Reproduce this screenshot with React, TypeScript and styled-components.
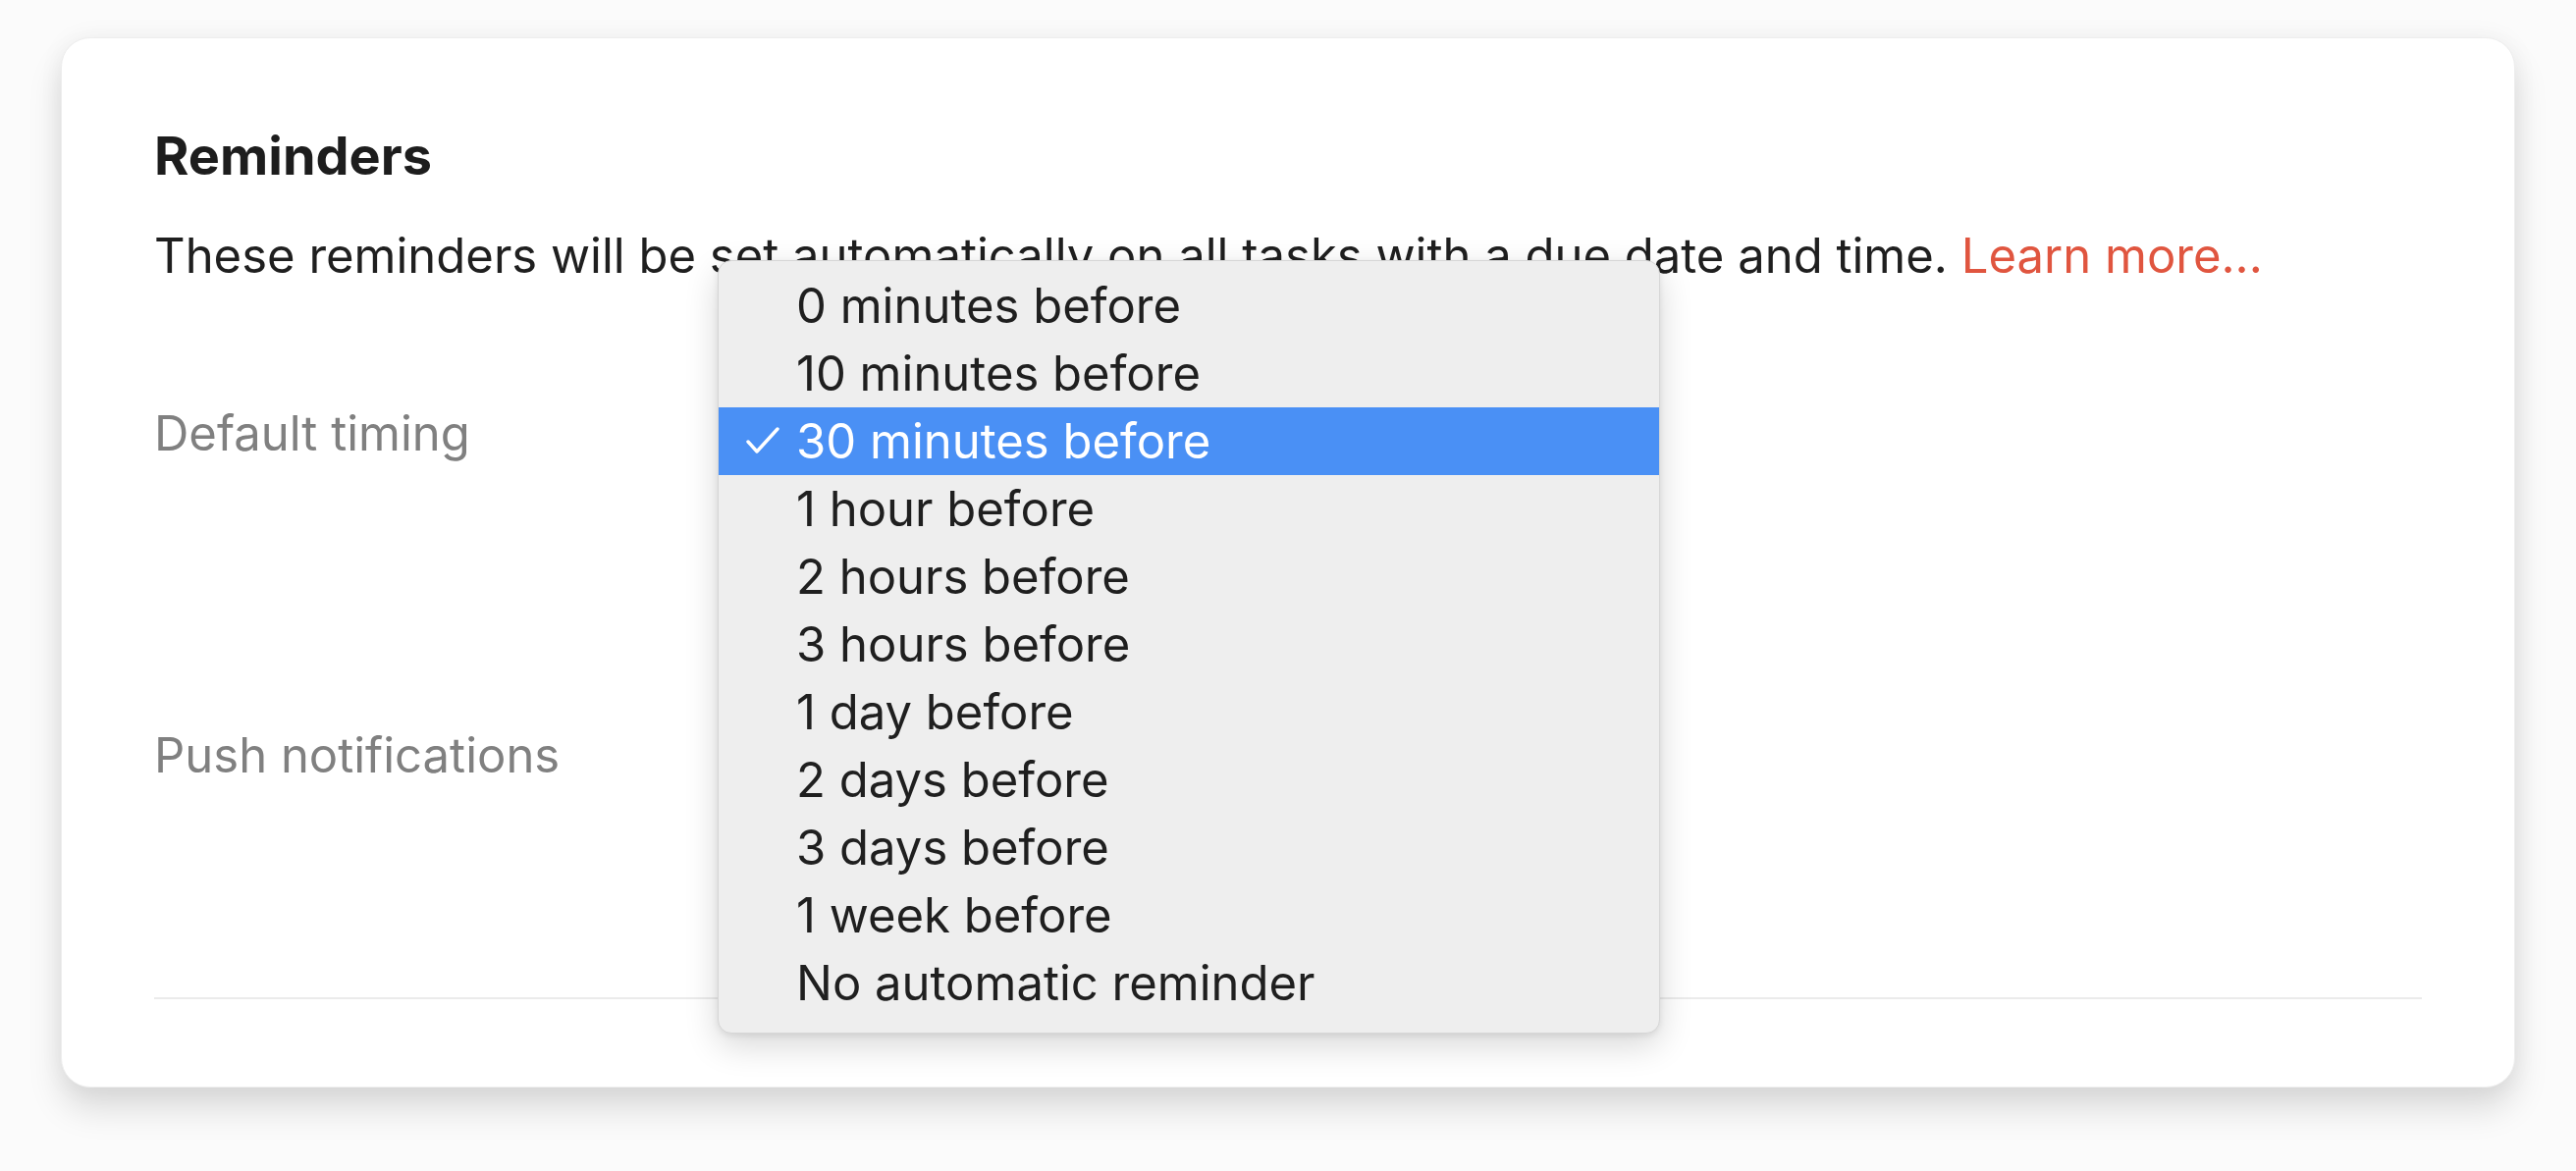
import React from 'react';
import styled, { createGlobalStyle } from 'styled-components';

const GlobalStyle = createGlobalStyle`
  html, body {
    margin: 0;
    padding: 0;
    background: #fbfbfb;
  }
  body {
    font-family: Inter, "Noto Sans", "Liberation Sans", sans-serif;
    color: #202020;
  }
`;

const Page = styled.div`
  padding: 38px 62px 85px 62px;
`;

const Card = styled.section`
  position: relative;
  background: #ffffff;
  border-radius: 30px;
  border: 1px solid #eeeeee;
  box-shadow: 0 22px 34px rgba(0, 0, 0, 0.13), 0 0 26px rgba(0, 0, 0, 0.05);
  padding: 90px 94px 89px 94px;
`;

const Title = styled.h2`
  margin: 0;
  font-size: 54px;
  line-height: 60px;
  font-weight: 700;
  color: #1d1d1d;
`;

const Description = styled.p`
  margin: 42px 0 0 0;
  font-size: 49px;
  line-height: 60px;
  color: #1f1f1f;
`;

const LearnMore = styled.a`
  color: #e0553f;
  text-decoration: none;
  cursor: pointer;
`;

const SettingsList = styled.div`
  margin-top: 121px;
  display: flex;
  flex-direction: column;
`;

const SettingsRow = styled.div<{ $height: number }>`
  display: grid;
  grid-template-columns: 560px 1fr;
  height: ${(p) => p.$height}px;
`;

const Label = styled.div`
  font-size: 49px;
  line-height: 60px;
  color: #808080;
`;

const Divider = styled.hr`
  margin: 0;
  border: none;
  height: 2px;
  background: #ebebeb;
`;

const Menu = styled.ul`
  position: absolute;
  left: 668px;
  top: 226px;
  width: 958px;
  margin: 0;
  padding: 11px 0 16px 0;
  list-style: none;
  background: #eeeeee;
  border: 1px solid #d6d6d6;
  border-radius: 14px;
  box-shadow: 0 12px 34px rgba(0, 0, 0, 0.16), 0 2px 6px rgba(0, 0, 0, 0.08);
`;

const MenuItem = styled.li<{ $selected?: boolean }>`
  position: relative;
  height: 69px;
  display: flex;
  align-items: center;
  padding-left: 79px;
  font-size: 49px;
  color: ${(p) => (p.$selected ? '#ffffff' : '#1f1f1f')};
  background: ${(p) => (p.$selected ? '#4a90f5' : 'transparent')};
`;

const Check = styled.svg`
  position: absolute;
  left: 27px;
  top: 19px;
`;

const options = [
  '0 minutes before',
  '10 minutes before',
  '30 minutes before',
  '1 hour before',
  '2 hours before',
  '3 hours before',
  '1 day before',
  '2 days before',
  '3 days before',
  '1 week before',
  'No automatic reminder',
];

const selected = '30 minutes before';

const CheckIcon = () => (
  <Check width="36" height="30" viewBox="0 0 36 30">
    <polyline
      points="3,16 12,26 33,3"
      fill="none"
      stroke="#ffffff"
      strokeWidth="3.4"
      strokeLinecap="round"
      strokeLinejoin="round"
    />
  </Check>
);

const App = () => {
  return (
    <>
      <GlobalStyle />
      <Page>
        <Card>
          <Title>Reminders</Title>
          <Description>
            These reminders will be set automatically on all tasks with a due date and time.{' '}
            <LearnMore>Learn more...</LearnMore>
          </Description>
          <SettingsList>
            <SettingsRow $height={328}>
              <Label>Default timing</Label>
              <div />
            </SettingsRow>
            <SettingsRow $height={276}>
              <Label>Push notifications</Label>
              <div />
            </SettingsRow>
            <Divider />
          </SettingsList>

          {/* open dropdown for default timing, drawn over the rows */}
          <Menu>
            {options.map((opt) => (
              <MenuItem key={opt} $selected={opt === selected}>
                {opt === selected && <CheckIcon />}
                {opt}
              </MenuItem>
            ))}
          </Menu>
        </Card>
      </Page>
    </>
  );
};

export default App;
